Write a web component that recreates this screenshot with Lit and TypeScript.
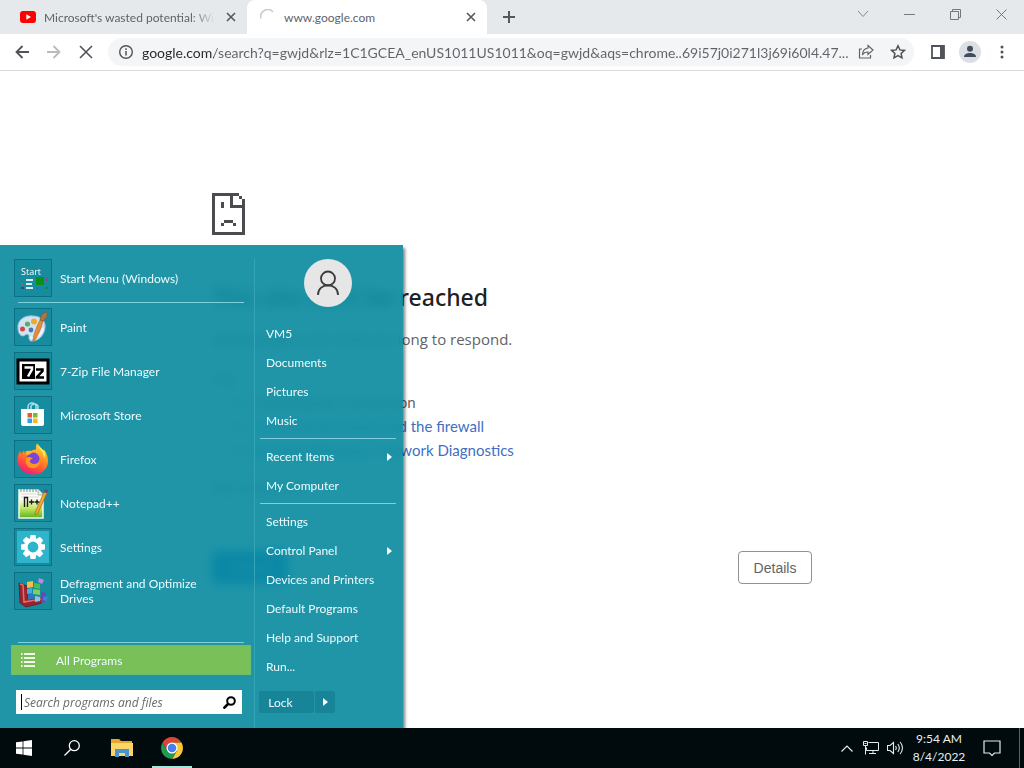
import { LitElement, html, svg, css, nothing } from "lit";
import { customElement, state } from "lit/decorators.js";

const windowsLogo = svg`<path fill="#fff" d="M0 2.300 6.600 1.400V7.600H0zM7.400 1.300 16 0v7.600H7.400zM0 8.400h6.600v6.200L0 13.700zM7.400 8.400H16V16l-8.600-1.200z"/>`;

const appIcons = {
  start: svg`
    <text x="7" y="16" font-size="9" fill="#fff" font-family="Open Sans, sans-serif">Start</text>
    <path fill="#fff" d="M12 20h7v2h-7zM12 24h6v2h-6zM12 28h7v2h-7z" opacity=".85"/>
    <path fill="#0a8f1b" d="M22 18h8v8h-8z"/><path fill="#8a4d86" d="M31 18h3v4h-3z"/>
    <path fill="#9c5a7a" d="M7 24h2v2H7z"/><path fill="#3d3f9a" d="M7 28h3v2H7z"/>
    <path fill="#1478c8" d="M22 28h3v2h-3z"/><path fill="#128a3a" d="M31 28h3v2h-3z"/>`,
  paint: svg`
    <path d="M4 20C3 12 11 7 19 8c8 0 13 5 12 12-1 8-7 13-13 13-3 0-3-2-3-5 0-2-2-2-4-1-4 3-7-2-7-7z" fill="#cfe4f3" stroke="#9dbfdc"/>
    <path d="M16 29c4 3 12-2 13-9" fill="none" stroke="#eef7fd" stroke-width="2"/>
    <circle cx="8.500" cy="21" r="2.500" fill="#d8453c"/><circle cx="13.500" cy="16" r="2.600" fill="#67a95a"/>
    <circle cx="20" cy="13.500" r="3" fill="#f1a92e"/><circle cx="17" cy="22" r="2.400" fill="#3f79b5"/>
    <path d="M19 34c-1-4 5-19 7-22l3 1c-1 5-6 18-10 21z" fill="#e58b3a" stroke="#b86321" stroke-width=".6"/>
    <path d="M26 12c0-4 3-8 8-8-1 4-2 8-5 9z" fill="#a9754a" stroke="#775033" stroke-width=".6"/>`,
  sevenzip: svg`
    <path d="M4 8h30v23H4z" fill="#fff" stroke="#000" stroke-width="3"/>
    <path d="M8 12h13v15H8z" fill="#000"/>
    <path d="M10.500 15.500h7.500v2L14 24.500" fill="none" stroke="#fff" stroke-width="2.500"/>
    <path d="M22 17.500h6.500v1.500L23 25v.5h7" fill="none" stroke="#000" stroke-width="2.500"/>`,
  store: svg`
    <path d="M14 14v-3a4 4 0 0 1 8 0v3M17 13v-3a4 4 0 0 1 7 0v5" fill="none" stroke="#a9e4ee" stroke-width="1.500"/>
    <path d="M7 13h23v15a2 2 0 0 1-2 2H9a2 2 0 0 1-2-2z" fill="#fff"/>
    <path d="M13.500 17h4.500v4.500h-4.500z" fill="#f0562b"/><path d="M19 17h4.500v4.500H19z" fill="#7db928"/>
    <path d="M13.500 22.500h4.500V27h-4.500z" fill="#2aa5e3"/><path d="M19 22.500h4.500V27H19z" fill="#fbb81c"/>`,
  firefox: svg`
    <defs><linearGradient id="ff" x1=".8" y1="0" x2=".3" y2="1"><stop offset="0" stop-color="#ffe243"/><stop offset=".45" stop-color="#ff8a1e"/><stop offset=".8" stop-color="#ff3a50"/><stop offset="1" stop-color="#e4207c"/></linearGradient></defs>
    <path d="M3.500 20c0-4 1-7 3-9l.5 3 3-3.500c0 2 1 3 3 3 3-1 4-4 9-4 0-3 0-4 1-6 2 3 4 5 6 7l1-1c3 4 4 8 4 12 0 7-6 13-15 13S3.500 28 3.500 20z" fill="url(#ff)"/>
    <circle cx="19" cy="19" r="6.500" fill="#7a45d8"/>
    <path d="M12 18c3-2 5-1 7 1-3 0-4 2-2 4 3 2 7 1 9-3 0 6-4 9-9 8-4-1-6-5-5-10z" fill="#ff9420"/>
    <path d="M11 12c3-2 6-1 8 0-2 1-3 3-6 3z" fill="#ffb42b"/>
    <path d="M24 4c0 5 6 7 6 14 2-3 1-6 0-7 0-1-5-4-6-7z" fill="#fff04d"/>`,
  notepad: svg`
    <defs><linearGradient id="np" x1="0" y1="0" x2="0" y2="1"><stop offset=".3" stop-color="#fdfef8"/><stop offset=".65" stop-color="#c2e661"/><stop offset="1" stop-color="#58b51a"/></linearGradient></defs>
    <path d="M5 6h19l5 5v23H5z" fill="url(#np)" stroke="#f4f8ee" stroke-width="1.500"/>
    <path d="M7 5v3M10 5v3M13 5v3M16 5v3M19 5v3M22 5v3" stroke="#7c8a8c"/>
    <path d="M7 10h15M7 13h18" stroke="#c5ccd2" stroke-width=".7"/>
    <path d="M24 6v5h5" fill="#dfe6e2" stroke="#8fa08c" stroke-width=".7"/>
    <path d="M10.500 23V13.500h3V23M15 18h5M17.500 15.500v5M20.500 18h5M23 15.500v5" fill="none" stroke="#1b1b1b" stroke-width="1.400"/>
    <path d="M21 29 30 8l3 1-9 20-3 2z" fill="#f3a92c" stroke="#a5641c" stroke-width=".7"/>
    <path d="m30 8 1-3 3 1-1 3z" fill="#5d4b8c"/>`,
  settings: svg`
    <path d="M3 3h32v32H3z" fill="#2fb5cb"/>
    <g fill="#fff">${[0, 45, 90, 135, 180, 225, 270, 315].map(
      (a) => svg`<path d="M16.500 7h5l.8 5h-6.600z" transform="rotate(${a} 19 19)"/>`)}</g>
    <circle cx="19" cy="19" r="7.200" fill="#2fb5cb" stroke="#fff" stroke-width="3.600"/>`,
  defrag: svg`
    <path d="m5 11 8 3 1 14 14-2v5l-16 4-6-4z" fill="#9b2430" stroke="#5d141e" stroke-width=".7"/>
    <path d="m6 12 3 1 1 17 17-3" fill="none" stroke="#e26f62" stroke-width="1.500"/>
    <path d="m13 10 6-1v6l-6 1z" fill="#eec14d"/><path d="m20 11 6 1v5l-6-1z" fill="#4cba5b"/>
    <path d="m13 17 5-1v5l-5 1z" fill="#4ba9dd"/><path d="m19 17 7 1v5l-7-1z" fill="#79cf63"/>
    <path d="m14 23 5-1v5l-5 1z" fill="#3472c9"/><path d="m21 24 5 1v4l-5 1z" fill="#87c5ee"/>
    <path d="m27 20 5 1-1 9-4 1z" fill="#7044b8"/><path d="m25 6 5 2-2 4-4-2z" fill="#bb8be0"/>
    <path d="m30 24 4 1-2 4-3-1z" fill="#3b83e0"/>`,
};

const programs: { icon: keyof typeof appIcons; label: string }[] = [
  { icon: "paint", label: "Paint" },
  { icon: "sevenzip", label: "7-Zip File Manager" },
  { icon: "store", label: "Microsoft Store" },
  { icon: "firefox", label: "Firefox" },
  { icon: "notepad", label: "Notepad++" },
  { icon: "settings", label: "Settings" },
  { icon: "defrag", label: "Defragment and Optimize Drives" },
];

const places: { label: string; sub?: boolean }[][] = [
  [{ label: "VM5" }, { label: "Documents" }, { label: "Pictures" }, { label: "Music" }],
  [{ label: "Recent Items", sub: true }, { label: "My Computer" }],
  [
    { label: "Settings" },
    { label: "Control Panel", sub: true },
    { label: "Devices and Printers" },
    { label: "Default Programs" },
    { label: "Help and Support" },
    { label: "Run..." },
  ],
];

const reset = css`
  * { box-sizing: border-box; }
  button {
    font: inherit; color: inherit; background: none; border: 0; padding: 0; margin: 0;
    display: flex; align-items: center; justify-content: center; flex: none;
  }
  svg { display: block; flex: none; }
`;

@customElement("browser-chrome")
export class BrowserChrome extends LitElement {
  static styles = [reset, css`
    :host { display: block; }
    .strip { display: flex; height: 34px; background: #e6e9ec; color: #5f6368; font-size: 12px; padding-left: 7px; }
    .tab { display: flex; align-items: center; width: 240px; gap: 8px; padding: 0 8px 0 13px; }
    .tab.active { background: #fff; border-radius: 8px 8px 0 0; }
    .title { flex: 1; overflow: hidden; white-space: nowrap; }
    .fade { -webkit-mask-image: linear-gradient(90deg, #000 86%, transparent); mask-image: linear-gradient(90deg, #000 86%, transparent); }
    .close { width: 16px; height: 16px; }
    .new { width: 28px; margin-left: 8px; }
    .controls { display: flex; margin-left: auto; height: 28px; }
    .controls button { width: 46px; }
    .bar { display: flex; align-items: center; height: 37px; border-bottom: 1px solid #d9dbde; background: #fff; padding: 0 6px; }
    .bar > button { width: 32px; height: 32px; }
    .omni { flex: 1; min-width: 0; display: flex; align-items: center; height: 28px; border-radius: 14px; background: #f3f5f7; margin: 0 8px 0 6px; padding: 0 0 0 10px; gap: 8px; }
    .url {
      flex: 1; min-width: 0; height: 20px; font: inherit; font-size: 14px; border: 0; padding: 0; outline: none; text-overflow: ellipsis;
      background: linear-gradient(90deg, #26282b 72px, #5f6368 72px); -webkit-background-clip: text; background-clip: text; -webkit-text-fill-color: transparent;
    }
    .omni button { width: 32px; height: 28px; }
    .acts { display: flex; margin-left: -8px; }
  `];

  private cross() {
    return html`<svg width="10" height="10" viewBox="0 0 10 10"><path d="m1 1 8 8M9 1 1 9" stroke="#54585d" stroke-width="1.600"/></svg>`;
  }

  render() {
    return html`
      <div class="strip">
        <div class="tab">
          <svg width="16" height="12" viewBox="0 0 16 12"><rect width="16" height="12" rx="3" fill="#f00"/><path d="M6.300 3.300v5.400L11 6z" fill="#fff"/></svg>
          <span class="title fade">Microsoft's wasted potential: Windows</span>
          <button class="close" aria-label="Close tab">${this.cross()}</button>
        </div>
        <div class="tab active">
          <svg width="16" height="16" viewBox="0 0 16 16"><path d="M1 9.500A7 7 0 0 1 13 3" fill="none" stroke="#c9ccd1" stroke-width="1.600"/></svg>
          <span class="title">www.google.com</span>
          <button class="close" aria-label="Close tab">${this.cross()}</button>
        </div>
        <button class="new" aria-label="New tab"><svg width="12" height="12" viewBox="0 0 12 12"><path d="M6 0v12M0 6h12" stroke="#54585d" stroke-width="2"/></svg></button>
        <div class="controls">
          <button aria-label="Search tabs"><svg width="12" height="8" viewBox="0 0 12 8"><path d="m1 1 5 5.500L11 1" fill="none" stroke="#85898d"/></svg></button>
          <button aria-label="Minimize"><svg width="11" height="11" viewBox="0 0 11 11"><path d="M0 5.500h11" stroke="#74787c"/></svg></button>
          <button aria-label="Restore"><svg width="11" height="11" viewBox="0 0 11 11"><path d="M.5 2.500h8v8h-8zM2.500 2.500v-2h8v8h-2" fill="none" stroke="#74787c"/></svg></button>
          <button aria-label="Close"><svg width="11" height="11" viewBox="0 0 11 11"><path d="m.5.500 10 10M10.500.5l-10 10" stroke="#74787c"/></svg></button>
        </div>
      </div>
      <div class="bar">
        <button aria-label="Back"><svg width="14" height="14" viewBox="0 0 14 14"><path d="M14 7H1.500M7.500 1l-6 6 6 6" fill="none" stroke="#505459" stroke-width="1.800"/></svg></button>
        <button aria-label="Forward"><svg width="14" height="14" viewBox="0 0 14 14"><path d="M0 7h12.500M6.500 1l6 6-6 6" fill="none" stroke="#b9bbbe" stroke-width="1.800"/></svg></button>
        <button aria-label="Stop"><svg width="14" height="14" viewBox="0 0 14 14"><path d="m1 1 12 12M13 1 1 13" stroke="#505459" stroke-width="1.600"/></svg></button>
        <div class="omni">
          <svg width="16" height="16" viewBox="0 0 16 16"><circle cx="8" cy="8" r="6.300" fill="none" stroke="#505459" stroke-width="1.400"/><path d="M8 7v4.500M8 4.300V6" stroke="#505459" stroke-width="1.500"/></svg>
          <input class="url" type="text" aria-label="Address and search bar" .value=${"google.com/search?q=gwjd&rlz=1C1GCEA_enUS1011US1011&oq=gwjd&aqs=chrome..69i57j0i271l3j69i60l4.47..."} />
          <div class="acts">
            <button aria-label="Share"><svg width="16" height="16" viewBox="0 0 16 16"><path d="M4 5H1.500v9h11v-3M10 1.500 15 6l-5 4.500V8C7.500 8 5.500 9 4.500 11 4.500 7.500 6.500 4.500 10 4z" fill="none" stroke="#5f6368" stroke-width="1.200"/></svg></button>
            <button aria-label="Bookmark"><svg width="16" height="16" viewBox="0 0 16 16"><path d="m8 1.800 1.900 4.100 4.500.5-3.300 3 .9 4.500L8 11.600l-4 2.300.9-4.500-3.300-3 4.500-.5z" fill="none" stroke="#505459" stroke-width="1.500"/></svg></button>
          </div>
        </div>
        <button aria-label="Side panel"><svg width="14" height="14" viewBox="0 0 14 14"><path d="M1 1h12v12H1z" fill="none" stroke="#505459" stroke-width="1.800"/><path d="M9 1h4v12H9z" fill="#505459"/></svg></button>
        <button aria-label="Profile"><svg width="22" height="22" viewBox="0 0 22 22"><circle cx="11" cy="11" r="11" fill="#dcdfe4"/><circle cx="11" cy="7.800" r="3" fill="#434c5e"/><path d="M5 16c0-3 3-4 6-4s6 1 6 4z" fill="#434c5e"/></svg></button>
        <button aria-label="Menu"><svg width="4" height="14" viewBox="0 0 4 14" fill="#505459"><circle cx="2" cy="2" r="1.500"/><circle cx="2" cy="7" r="1.500"/><circle cx="2" cy="12" r="1.500"/></svg></button>
      </div>`;
  }
}

@customElement("error-page")
export class ErrorPage extends LitElement {
  static styles = [reset, css`
    :host { display: block; background: #fff; color: #5f6368; font-size: 15px; line-height: 24px; }
    .body { width: 600px; max-width: 100%; margin: 0 auto; padding-top: 122px; white-space: nowrap; }
    h1 { margin: 47px 0 0; font-family: "Noto Sans", sans-serif; font-size: 23px; line-height: 30px; font-weight: 500; color: #202124; }
    p { margin: 15px 0 0; font-family: "Open Sans", sans-serif; }
    ul { margin: 0; padding-left: 40px; }
    a { color: #3f6fc4; text-decoration: none; }
    .code { font-size: 12px; }
    .row { display: flex; justify-content: space-between; margin-top: 50px; font-size: 14px; }
    .row button { height: 33px; border-radius: 4px; font-family: "Liberation Sans", sans-serif; }
    .reload { width: 76px; background: #1a73e8; color: #fff; }
    .row .details { width: 74px; border: 1px solid #8f9296; }
  `];
  render() {
    return html`<div class="body">
      <svg width="33" height="42" viewBox="0 0 11 14" fill="#4a4c4f" shape-rendering="crispEdges">
        <path d="M0 0h9v1H7v3h4v10H0zM1 1v12h9V5H6V1z" fill-rule="evenodd"/>
        <path d="M9 1h1v1H9zM10 2h1v3h-1zM3 3h1v2H3zM4 9h3v1H4zM3 10h1v1H3zM7 10h1v1H7z"/>
      </svg>
      <h1>This site can’t be reached</h1>
      <p>www.google.com took too long to respond.</p>
      <p>Try:</p>
      <ul>
        <li>Checking the connection</li>
        <li><a href="#">Checking the proxy and the firewall</a></li>
        <li><a href="#">Running Windows Network Diagnostics</a></li>
      </ul>
      <p class="code">ERR_TIMED_OUT</p>
      <div class="row"><button class="reload">Reload</button><button class="details">Details</button></div>
    </div>`;
  }
}

@customElement("start-menu")
export class StartMenu extends LitElement {
  static styles = [reset, css`
    :host {
      display: grid; grid-template-columns: 254px 1fr; width: 403px; padding-top: 14px;
      color: #eefbfd; font-size: 12px; line-height: 15px;
      background: rgba(8, 138, 158, 0.9); box-shadow: 2px 3px 3px rgba(0, 0, 0, 0.5);
      backdrop-filter: blur(6px);
    }
    .left { display: flex; flex-direction: column; padding-bottom: 14px; }
    .item { justify-content: flex-start; text-align: left; gap: 8px; margin: 0 20px 6px 14px; }
    .item span { max-width: 150px; }
    .tile { width: 38px; height: 38px; border: 1px solid #0d7083; background: rgba(8, 120, 140, 0.3); flex: none; }
    .tile svg { margin: -1px; }
    .line { height: 1px; background: #7fd0da; margin: 0 10px 5px 18px; }
    .first { margin-bottom: 5px; }
    .tail { margin-top: 26px; margin-bottom: 2px; }
    .all { height: 30px; margin: 0 3px 15px 11px; background: #78c057; justify-content: flex-start; padding-left: 9px; gap: 21px; border: 1px solid #6fbe70; }
    .find { display: flex; align-items: center; height: 24px; margin: 0 12px 0 16px; background: #fff; padding: 0 6px 0 5px; }
    .find input { flex: 1; min-width: 0; border: 0; border-left: 1px solid #000; outline: 0; padding: 0 0 0 2px; height: 16px; font: italic 12px "Open Sans", sans-serif; background: #fff; color: #333; }
    .find input::placeholder { color: #6a6a6a; opacity: 1; }
    .right { display: flex; flex-direction: column; border-left: 1px solid #35a5b5; padding: 0 7px 0 5px; }
    .avatar { align-self: center; margin-bottom: 12px; }
    .place { height: 29px; justify-content: space-between; padding: 0 4px 0 6px; }
    .right .line { margin: 3px 0; }
    .power { display: flex; gap: 1px; height: 22px; margin-top: 10px; margin-left: -1px; }
    .power button { background: #178497; border-radius: 2px; }
    .lock { width: 55px; padding-right: 12px; }
    .more { width: 20px; }
  `];

  private arrow() {
    return html`<svg width="5" height="8" viewBox="0 0 5 8"><path d="M0 0v8l5-4z" fill="#fff"/></svg>`;
  }
  private entry(icon: keyof typeof appIcons, label: string, extra = "") {
    return html`<button class="item ${extra}">
      <div class="tile"><svg width="38" height="38" viewBox="0 0 38 38">${appIcons[icon]}</svg></div><span>${label}</span>
    </button>`;
  }
  render() {
    return html`
      <div class="left">
        ${this.entry("start", "Start Menu (Windows)", "first")}
        <div class="line"></div>
        ${programs.map((p) => this.entry(p.icon, p.label))}
        <div class="line tail"></div>
        <button class="all">
          <svg width="14" height="14" viewBox="0 0 14 14" stroke="#f2fbe9" stroke-width="2"><path d="M3 1h11M3 5h11M3 9h11M3 13h11"/><path d="M0 1h1.500M0 5h1.500M0 9h1.500M0 13h1.500"/></svg>
          All Programs
        </button>
        <label class="find">
          <input type="text" aria-label="Search programs and files" placeholder="Search programs and files" />
          <svg width="13" height="13" viewBox="0 0 13 13"><circle cx="8" cy="5" r="3.800" fill="none" stroke="#000" stroke-width="2"/><path d="m5.500 7.500-5 5" stroke="#000" stroke-width="2.600"/></svg>
        </label>
      </div>
      <div class="right">
        <svg class="avatar" width="48" height="48" viewBox="0 0 48 48"><circle cx="24" cy="24" r="24" fill="#e6e6e6"/><g fill="none" stroke="#3b3b3b" stroke-width="1.800"><circle cx="24" cy="19.500" r="7"/><path d="M14 36c0-13 20-13 20 0"/></g></svg>
        ${places.map((group, i) => html`
          ${i ? html`<div class="line"></div>` : nothing}
          ${group.map((p) => html`<button class="place"><span>${p.label}</span>${p.sub ? this.arrow() : nothing}</button>`)}
        `)}
        <div class="power"><button class="lock">Lock</button><button class="more" aria-label="Power options">${this.arrow()}</button></div>
      </div>`;
  }
}

@customElement("task-bar")
export class TaskBar extends LitElement {
  static styles = [reset, css`
    :host { display: flex; height: 40px; background: #010a0c; color: #e9eeee; font-size: 12px; line-height: 18px; }
    .app { width: 48px; position: relative; }
    .pin { margin-left: 2px; }
    .open::after { content: ""; position: absolute; left: 4px; right: 4px; bottom: 0; height: 2px; background: #a3e6df; }
    .tray { display: flex; margin-left: auto; }
    .tray button { width: 24px; }
    .tray .clock { width: 64px; flex-direction: column; white-space: nowrap; }
    .tray .note { width: 42px; }
    .desk { width: 5px; margin-left: 6px; border-left: 1px solid #5a6264; }
  `];
  render() {
    return html`
      <button class="app" aria-label="Start"><svg width="16" height="16" viewBox="0 0 16 16">${windowsLogo}</svg></button>
      <button class="app" aria-label="Search"><svg width="16" height="16" viewBox="0 0 16 16"><circle cx="10.300" cy="5.700" r="5" fill="none" stroke="#fff" stroke-width="1.300"/><path d="M6.800 9.200.5 15.500" stroke="#fff" stroke-width="1.300"/></svg></button>
      <button class="app pin" aria-label="File Explorer"><svg width="22" height="18" viewBox="0 0 22 18"><path d="M0 0h8l2 2h11v15H0z" fill="#e5a72c"/><path d="M0 4h22v13H0z" fill="#fbd667"/><path d="M4 10h14v8h-4v-4H8v4H4z" fill="#4794d0"/></svg></button>
      <button class="app pin open" aria-label="Chrome"><svg width="22" height="22" viewBox="0 0 22 22">
        <path d="M1.500 5.500A11 11 0 0 1 20.500 5.500H11L6.200 13.800z" fill="#db4437"/>
        <path d="M20.500 5.500A11 11 0 0 1 11 22L15.800 13.800 11 5.500z" fill="#f8c933"/>
        <path d="M11 22A11 11 0 0 1 1.500 5.500L6.200 13.800H15.800z" fill="#21994f"/>
        <circle cx="11" cy="11" r="5.500" fill="#fff"/><circle cx="11" cy="11" r="4.300" fill="#4580ee"/></svg></button>
      <div class="tray">
        <button aria-label="Hidden icons"><svg width="12" height="7" viewBox="0 0 12 7"><path d="m.5 6.500 5.500-5.500 5.500 5.500" fill="none" stroke="#e4ecec" stroke-width="1.200"/></svg></button>
        <button aria-label="Network"><svg width="16" height="14" viewBox="0 0 16 14" fill="none" stroke="#e4ecec"><path d="M5.500 1.500h10v8h-12v-3M.5.5h4v4h-4zM2.500 4.500v9M10 9.500v3M6 12.500h7M1.500 2.500h2"/></svg></button>
        <button aria-label="Volume"><svg width="17" height="14" viewBox="0 0 17 14" fill="none" stroke="#e4ecec" stroke-width="1.100"><path d="M.5 4.500h2.500l3.500-3v11l-3.500-3H.5zM8.500 5q1.500 2 0 4M10.800 3q3 4 0 8M13.200 1q4.500 6 0 12"/></svg></button>
        <button class="clock"><span>9:54 AM</span><span>8/4/2022</span></button>
        <button class="note" aria-label="Notifications"><svg width="18" height="17" viewBox="0 0 18 17"><path d="M1 1h16v12h-5.500L9 15.500 6.500 13H1z" fill="none" stroke="#e4ecec" stroke-width="1.200"/></svg></button>
        <div class="desk"></div>
      </div>`;
  }
}

@customElement("app-root")
export class AppRoot extends LitElement {
  @state() private menuOpen = true;
  static styles = css`
    :host { display: flex; flex-direction: column; height: 100vh; position: relative; overflow: hidden; font-family: Lato, "Open Sans", sans-serif; }
    error-page { flex: 1; min-height: 0; }
    browser-chrome, task-bar { flex: none; }
    start-menu { position: absolute; left: 0; bottom: 40px; }
    task-bar { z-index: 1; }
  `;
  render() {
    return html`<browser-chrome></browser-chrome><error-page></error-page>${this.menuOpen ? html`<start-menu></start-menu>` : nothing}<task-bar></task-bar>`;
  }
}
